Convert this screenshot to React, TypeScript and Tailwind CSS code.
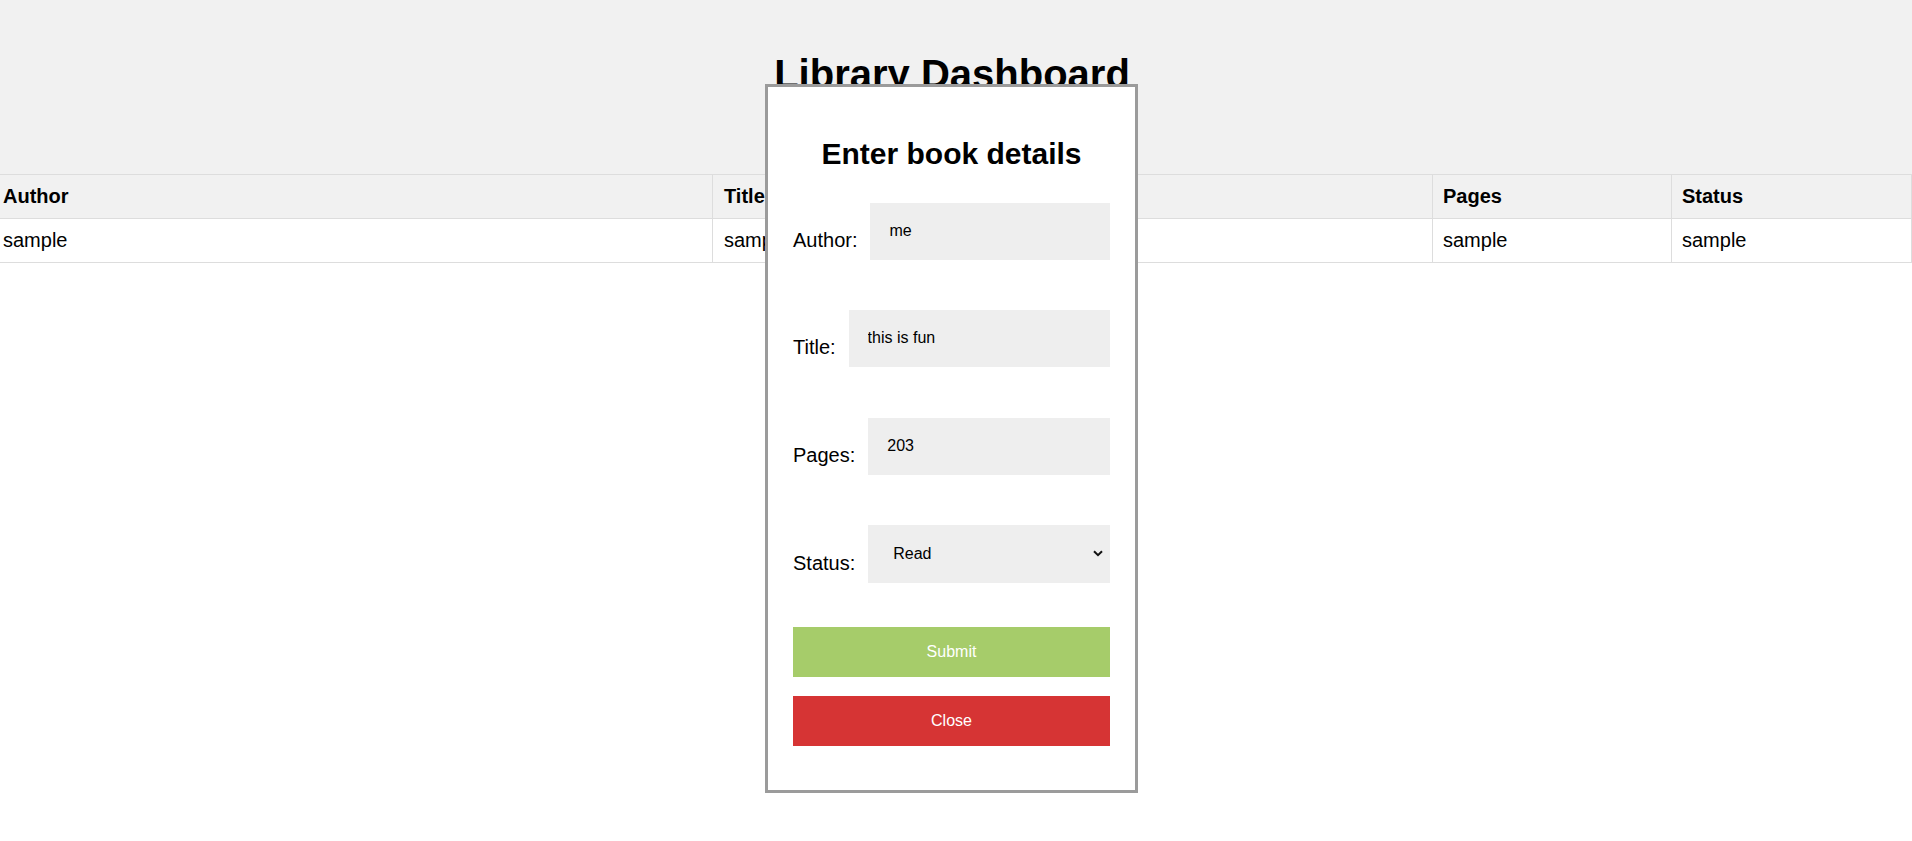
import { useState } from "react";

const columns = [
  { key: "author", label: "Author", cell: "pl-[3px]" },
  { key: "title", label: "Title", cell: "pl-[11px]" },
  { key: "pages", label: "Pages", cell: "pl-[10px]" },
  { key: "status", label: "Status", cell: "pl-[10px]" },
];

const BookModal = () => {
  const [author, setAuthor] = useState("me");
  const [title, setTitle] = useState("this is fun");
  const [pages, setPages] = useState("203");
  const [status, setStatus] = useState("Read");

  const inputClass =
    "h-[57px] min-w-0 flex-1 bg-[#eeeeee] pl-[19px] pb-[1px] text-[16px] text-black outline-none";

  return (
    <div className="absolute left-[765px] top-[84px] flex h-[709px] w-[373px] flex-col border-[3px] border-[#9b9b9b] bg-white px-[25px]">
      <h2 className="mt-[50px] text-center text-[30px] font-bold leading-[34px]">
        Enter book details
      </h2>

      <div className="mt-[32px] flex flex-col gap-[50.3px]">
        <div className="flex items-end gap-[13px]">
          <label className="mb-[9px] text-[20px] leading-[22px]">Author:</label>
          <input
            className={inputClass}
            value={author}
            onChange={(e) => setAuthor(e.target.value)}
          />
        </div>
        <div className="flex items-end gap-[13px]">
          <label className="mb-[9px] text-[20px] leading-[22px]">Title:</label>
          <input
            className={inputClass}
            value={title}
            onChange={(e) => setTitle(e.target.value)}
          />
        </div>
        <div className="flex items-end gap-[13px]">
          <label className="mb-[9px] text-[20px] leading-[22px]">Pages:</label>
          <input
            className={inputClass}
            value={pages}
            onChange={(e) => setPages(e.target.value)}
          />
        </div>
        <div className="flex items-end gap-[13px]">
          <label className="mb-[9px] text-[20px] leading-[22px]">Status:</label>
          <div className="relative flex-1">
            <select
              className="h-[58px] w-full appearance-none bg-[#eeeeee] pl-[25px] text-[16px] text-black outline-none"
              value={status}
              onChange={(e) => setStatus(e.target.value)}
            >
              <option>Read</option>
              <option>Not read</option>
            </select>
            <svg
              className="pointer-events-none absolute right-[7px] top-[25px]"
              width="10"
              height="7"
              viewBox="0 0 10 7"
              fill="none"
            >
              <path d="M1 1.2 L5 5.2 L9 1.2" stroke="#111" strokeWidth="2" />
            </svg>
          </div>
        </div>
      </div>

      <button className="mt-[44px] h-[50px] w-full bg-[#a6cc6a] text-[16px] text-white">
        Submit
      </button>
      <button className="mt-[19px] h-[50px] w-full bg-[#d63434] text-[16px] text-white">
        Close
      </button>
    </div>
  );
};

export default function App() {
  return (
    <div className="relative min-h-[841px] bg-white font-['Liberation_Sans',Arial,sans-serif] text-black">
      <div className="h-[174px] bg-[#f1f1f1] pr-[8px] pt-[51px]">
        <h1 className="text-center text-[40px] font-bold leading-[46px]">
          Library Dashboard
        </h1>
      </div>

      <div className="grid grid-cols-[713px_720px_239px_1fr] border-t border-[#dddddd] text-[20px]">
        {columns.map((c) => (
          <div
            key={c.key}
            className={`flex h-[44px] items-center border-b border-r border-[#dddddd] bg-[#f1f1f1] pb-[1px] font-bold ${c.cell}`}
          >
            {c.label}
          </div>
        ))}
        {columns.map((c) => (
          <div
            key={c.key + "-row"}
            className={`flex h-[44px] items-center border-b border-r border-[#dddddd] bg-white pb-[1px] ${c.cell}`}
          >
            sample
          </div>
        ))}
      </div>

      <BookModal />
    </div>
  );
}
